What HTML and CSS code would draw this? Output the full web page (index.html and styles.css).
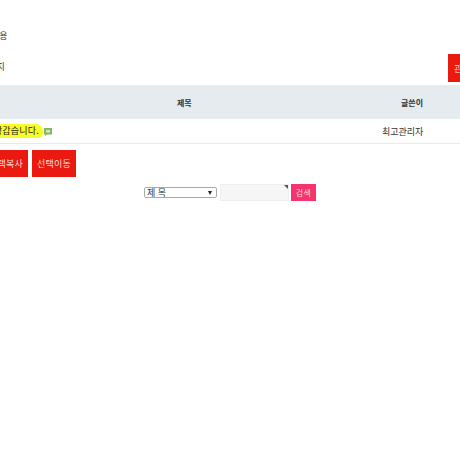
FILE: index.html
```html
<!DOCTYPE html>
<html lang="ko">
<head>
<meta charset="utf-8">
<title>게시판</title>
<link rel="stylesheet" href="styles.css">
</head>
<body>
<div class="page">
  <div class="crumb">이용</div>
  <div class="toolbar">
    <span class="count">페이지</span>
    <a class="btn btn-admin">관리자</a>
  </div>
  <table class="board">
    <thead>
      <tr><th class="c-subject">제목</th><th class="c-writer">글쓴이</th></tr>
    </thead>
    <tbody>
      <tr>
        <td class="c-subject-body"><span class="mark">상갑습니다.</span><svg class="memo" width="8" height="8" viewBox="0 0 8 8"><path d="M0 0h8v6.500H3L1 8V6.500H0z" fill="#86b56a"/><path d="M2 2h4v2.500H2z" fill="#d5e8bd"/></svg></td>
        <td class="c-writer-body">최고관리자</td>
      </tr>
    </tbody>
  </table>
  <div class="actions">
    <a class="btn btn-first">선택복사</a>
    <a class="btn btn-move">선택이동</a>
  </div>
  <form class="search">
    <span class="select-wrap">
      <select class="field-select"><option>제 목</option></select>
    </span>
    <span class="field-wrap"><input class="field-input" type="text"></span>
    <button class="btn-search" type="button">검색</button>
  </form>
</div>
</body>
</html>
```

FILE: styles.css
```css
html, body {
  margin: 0;
  padding: 0;
  height: 100%;
  overflow: hidden;
  background: #fff;
}
.page {
  width: 460px;
  overflow: hidden;
  font-family: "Noto Sans CJK KR", "Liberation Sans", sans-serif;
  font-size: 9px;
  color: #333;
}
.crumb {
  margin-left: -9px;
  padding-top: 29px;
  height: 25px;
  line-height: 14px;
}
.toolbar {
  display: flex;
  justify-content: space-between;
  align-items: center;
  height: 28px;
  margin-bottom: 3px;
}
.count {
  margin-left: -20px;
  margin-top: -3px;
}
.btn {
  display: flex;
  align-items: center;
  justify-content: center;
  box-sizing: border-box;
  background: #ea1a10;
  color: #f8dfdb;
  white-space: nowrap;
  font-size: 9px;
}
.btn-admin {
  width: 40px;
  height: 28px;
  margin-right: -28px;
  justify-content: flex-start;
  padding-left: 6px;
}
.board {
  width: 460px;
  border-collapse: collapse;
  table-layout: fixed;
}
.board th {
  height: 34px;
  padding: 0;
  background: #e5ebee;
  font-size: 8px;
  font-weight: 700;
  color: #333;
}
.board .c-subject { text-align: left; text-indent: 177px; }
.c-writer { width: 118px; }
.board .c-writer { text-align: left; text-indent: 59px; }
.board td {
  height: 24px;
  padding: 0;
  border-bottom: 1px solid #e9e9e9;
  color: #333;
}
.c-subject-body {
  white-space: nowrap;
  overflow: hidden;
}
.mark {
  display: inline-block;
  margin: -2px 0 0 -10px;
  padding: 0 4px 0 0;
  width: 53px;
  box-sizing: border-box;
  height: 14px;
  line-height: 14px;
  background: #fbfb2a;
  border-radius: 0 7px 5px 0;
  color: #222;
  text-align: right;
  vertical-align: middle;
  letter-spacing: 0.2px;
}
.memo {
  vertical-align: middle;
  margin-left: 1px;
}
.c-writer-body {
  text-indent: 40px;
}
.actions {
  display: flex;
  gap: 4px;
  margin-top: 6px;
  margin-left: -16px;
}
.actions .btn {
  height: 27px;
  letter-spacing: 0.2px;
}
.btn-first { width: 44px; }
.btn-move { width: 44px; }
.search {
  display: flex;
  align-items: center;
  margin: 6px 0 0 144px;
  height: 18px;
}
.select-wrap {
  position: relative;
  display: block;
  width: 73px;
  height: 11px;
  margin-right: 3px;
}
.select-wrap::after {
  content: "";
  position: absolute;
  top: 4px;
  right: 5px;
  border-top: 4px solid #222;
  border-left: 2.500px solid transparent;
  border-right: 2.500px solid transparent;
}
.field-select {
  display: block;
  appearance: none;
  width: 100%;
  height: 100%;
  box-sizing: border-box;
  padding: 0 0 0 2px;
  margin: 0;
  border: 1px solid #aaa;
  border-radius: 2px;
  background: #fff;
  font: 9px/9px "Noto Sans CJK KR", sans-serif;
  color: #333;
}
.field-wrap {
  position: relative;
  display: block;
  width: 69px;
  height: 17px;
  margin-right: 2px;
}
.field-wrap::after {
  content: "";
  position: absolute;
  top: 1px;
  right: 1px;
  border-top: 4px solid #555;
  border-left: 4px solid transparent;
}
.field-input {
  display: block;
  width: 100%;
  height: 100%;
  box-sizing: border-box;
  margin: 0;
  padding: 0;
  border: 1px solid #eee;
  background: #f6f6f6;
}
.btn-search {
  width: 25px;
  height: 17px;
  padding: 0;
  border: 0;
  background: #f6336c;
  color: #fbd6e0;
  font: 8px "Noto Sans CJK KR", sans-serif;
  letter-spacing: 0.4px;
}
```
